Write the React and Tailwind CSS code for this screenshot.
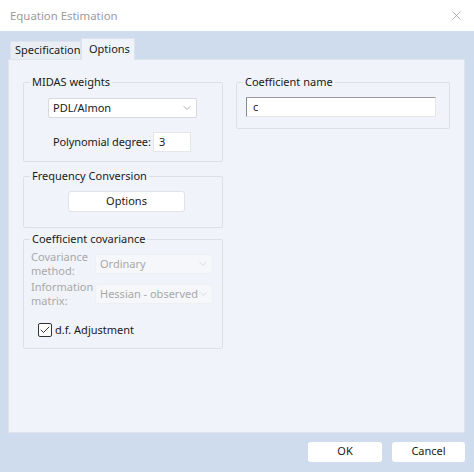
import { ChevronDown, X, Check } from 'lucide-react';

function Select({ value, width, disabled }) {
  return (
    <div
      className={`flex h-[20px] items-center justify-between whitespace-nowrap rounded-[2px] border pl-[4px] pr-[3px] ${
        disabled ? 'border-[#eef0f4] bg-[#f5f7fa] text-[#a8a8a8]' : 'border-[#d6d8dc] bg-white text-[#1a1a1a]'
      }`}
      style={{ width }}
    >
      <span>{value}</span>
      <ChevronDown size={12} strokeWidth={1.2} className={disabled ? 'text-[#c4c4c4]' : 'text-[#7a7a7a]'} />
    </div>
  );
}

// group box: the title sits on the top border line
function Group({ title, className, children }) {
  return (
    <div className={`rounded-[2px] border border-[#dde0e6] ${className}`}>
      <div className="-mt-[9px] ml-[6px] w-fit bg-[#f0f3f9] px-[2px] leading-[16px] text-[#1a1a1a]">{title}</div>
      {children}
    </div>
  );
}

export default function App() {
  return (
    <div
      className="flex h-[472px] w-[474px] flex-col bg-[#cfdcee] text-[11px] text-[#1a1a1a]"
      style={{ fontFamily: '"Noto Sans", "Open Sans", sans-serif' }}
    >
      {/* title bar */}
      <div className="flex h-[31px] shrink-0 items-center justify-between bg-white pl-[10px] pr-[10px]">
        <span className="text-[11.4px] text-[#9b9b9b]">Equation Estimation</span>
        <X size={15} strokeWidth={1} className="text-[#8a8a8a]" />
      </div>

      <div className="flex flex-1 flex-col pl-[8px] pr-[9px] pt-[6px]">
        {/* tabs */}
        <div className="flex h-[22px] items-end pl-[2px]">
          <div className="flex h-[18px] w-[71px] items-center border border-b-0 border-[#dfe4ec] bg-[#e9eef5] pl-[4px]">
            Specification
          </div>
          <div className="relative top-[1px] flex h-[22px] w-[54px] items-center border border-b-0 border-[#dfe4ec] bg-[#f0f3f9] pl-[7px]">
            Options
          </div>
        </div>

        {/* panel */}
        <div className="flex h-[374px] gap-[13px] border border-[#dfe4ec] bg-[#f0f3f9] pl-[14px] pt-[22px]">
          <div className="flex w-[200px] flex-col">
            <Group title="MIDAS weights" className="h-[80px]">
              <div className="ml-[24px] mt-[8px]">
                <Select value="PDL/Almon" width={149} />
              </div>
              <div className="ml-[29px] mt-[14px] flex items-center">
                <span className="w-[100px] whitespace-nowrap tracking-[-0.1px]">Polynomial degree:</span>
                <div className="flex h-[20px] w-[38px] items-center border border-[#e4e6ea] bg-white pl-[5px]">3</div>
              </div>
            </Group>

            <Group title="Frequency Conversion" className="mt-[14px] h-[52px]">
              <div className="ml-[44px] mt-[7px] flex h-[21px] w-[117px] items-center justify-center rounded-[3px] border border-[#e0e2e6] bg-white">
                Options
              </div>
            </Group>

            <Group title="Coefficient covariance" className="mt-[11px] h-[110px]">
              <div className="ml-[7px] mt-[3px] flex flex-col gap-[2px] text-[#a9a9a9]">
                <div className="flex items-center">
                  <span className="w-[64px] whitespace-nowrap leading-[14px]">
                    Covariance
                    <br />
                    method:
                  </span>
                  <Select value="Ordinary" width={118} disabled />
                </div>
                <div className="flex items-center">
                  <span className="w-[64px] whitespace-nowrap leading-[14px]">
                    Information
                    <br />
                    matrix:
                  </span>
                  <Select value="Hessian - observed" width={118} disabled />
                </div>
              </div>
              <div className="ml-[14px] mt-[14px] flex items-center gap-[3px]">
                <div className="flex h-[14px] w-[14px] items-center justify-center rounded-[2px] border border-[#333] bg-white">
                  <Check size={12} strokeWidth={1.8} className="text-[#222]" />
                </div>
                <span>d.f. Adjustment</span>
              </div>
            </Group>
          </div>

          <div className="flex w-[214px] flex-col">
            <Group title="Coefficient name" className="h-[47px]">
              <div className="ml-[9px] mt-[7px] flex h-[20px] w-[190px] items-center border border-l-[#8a8a8a] border-t-[#9a9a9a] border-r-[#e6e6e6] border-b-[#e6e6e6] bg-white pl-[6px]">
                c
              </div>
            </Group>
          </div>
        </div>

        {/* footer */}
        <div className="flex flex-1 items-center justify-end gap-[10px] pb-[2px]">
          <div className="flex h-[20px] w-[74px] items-center justify-center rounded-[3px] bg-white">OK</div>
          <div className="flex h-[20px] w-[73px] items-center justify-center rounded-[3px] bg-white">Cancel</div>
        </div>
      </div>
    </div>
  );
}
